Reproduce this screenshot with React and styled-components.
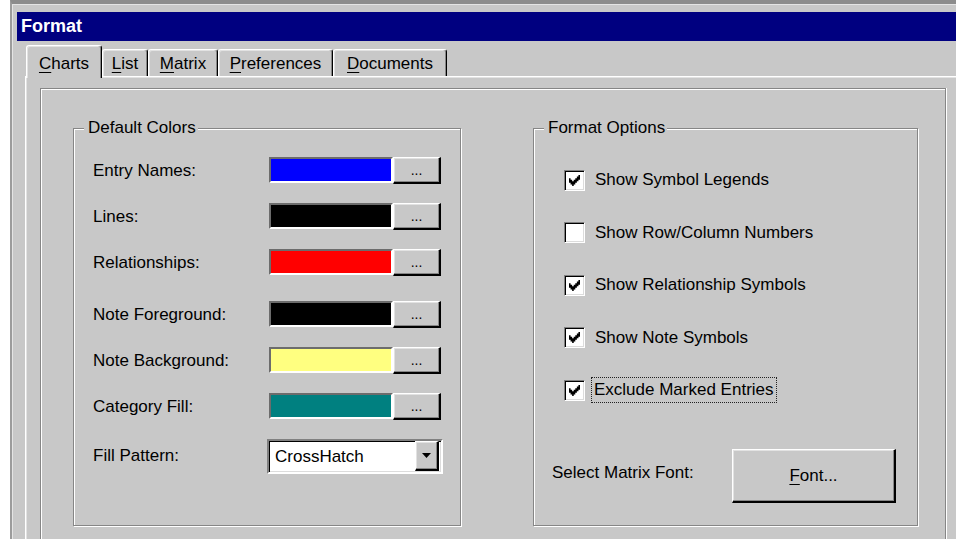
import React from "react";
import styled, { createGlobalStyle } from "styled-components";

const FACE = "#c8c8c8";
const SHADOW = "#868686";

const GlobalStyle = createGlobalStyle`
  html, body {
    margin: 0;
    padding: 0;
    background: #fff;
    overflow: hidden;
  }
  body {
    font-family: "Liberation Sans", Arial, sans-serif;
    font-size: 17px;
    color: #000;
  }
`;

const Window = styled.div`
  box-sizing: border-box;
  display: flex;
  flex-direction: column;
  margin-left: 10px;
  width: 946px;
  height: 539px;
  overflow: hidden;
  padding: 8px 0 0 5px;
  background: ${FACE};
  border-top: 4px solid #8c8c8c;
  border-left: 2px solid #9c9c9c;
  box-shadow: inset 1px 1px 0 #e4e4e4;
`;

const TitleBar = styled.div`
  display: flex;
  align-items: center;
  flex-shrink: 0;
  height: 29px;
  padding-left: 4px;
  background: #000080;
  color: #fff;
  font-size: 18px;
  font-weight: bold;
`;

const Body = styled.div`
  flex: 1;
  display: flex;
  flex-direction: column;
  padding: 4px 0 0 8px;
`;

const TabStrip = styled.div`
  position: relative;
  z-index: 1;
  display: flex;
  align-items: flex-end;
  flex-shrink: 0;
  height: 31px;
  padding-left: 1px;
`;

const Tab = styled.div`
  box-sizing: border-box;
  display: flex;
  justify-content: center;
  width: ${(p) => p.$width}px;
  height: ${(p) => (p.$active ? 33 : 27)}px;
  margin-bottom: ${(p) => (p.$active ? -2 : 0)}px;
  padding-top: ${(p) => (p.$active ? 8 : 4)}px;
  line-height: 20px;
  background: ${FACE};
  border-top: 1px solid #fff;
  border-left: 1px solid #fff;
  border-right: 1px solid #000;
  border-radius: 3px 3px 0 0;
  box-shadow: inset -1px 0 0 ${SHADOW}, inset 1px 1px 0 #e2e2e2;
`;

const Key = styled.span`
  text-decoration: underline;
  text-underline-offset: 3px;
`;

const Page = styled.div`
  flex: 1;
  display: flex;
  padding: 11px 0 0 14px;
  border-top: 1px solid #fff;
  border-left: 1px solid #fff;
  box-shadow: inset 1px 1px 0 #e2e2e2;
`;

/* etched frame inside the tab page; its bottom runs past the window */
const Frame = styled.div`
  box-sizing: border-box;
  display: grid;
  grid-template-columns: 388px 385px;
  column-gap: 72px;
  align-items: start;
  width: 906px;
  padding: 39px 0 0 32px;
  border: 1px solid ${SHADOW};
  border-bottom: none;
  box-shadow: inset 1px 1px 0 #fff, 1px 0 0 #fff;
`;

const Group = styled.div`
  position: relative;
  box-sizing: border-box;
  height: 398px;
  padding: ${(p) => p.$pad};
  border: 1px solid ${SHADOW};
  box-shadow: inset 1px 1px 0 #fff, 1px 1px 0 #fff;
`;

const Legend = styled.span`
  position: absolute;
  top: -11px;
  left: 10px;
  padding: 0 2px 0 4px;
  line-height: 20px;
  background: ${FACE};
`;

const Rows = styled.div`
  display: flex;
  flex-direction: column;
  gap: 19px;
`;

const Row = styled.div`
  display: flex;
  align-items: center;
  height: ${(p) => p.$height || 27}px;
  margin-top: ${(p) => p.$extra || 0}px;
`;

const Label = styled.span`
  width: ${(p) => p.$width}px;
  flex-shrink: 0;
  padding-bottom: ${(p) => p.$lift || 0}px;
`;

const Swatch = styled.div`
  box-sizing: border-box;
  align-self: flex-start;
  width: 124px;
  height: 26px;
  background: ${(p) => p.$color};
  border: 2px solid;
  border-color: #6c6c6c #fff #fff #6c6c6c;
`;

const RaisedButton = styled.div`
  box-sizing: border-box;
  display: flex;
  align-items: center;
  justify-content: center;
  width: ${(p) => p.$width}px;
  height: ${(p) => p.$height}px;
  background: ${FACE};
  border-top: 1px solid #fff;
  border-left: 1px solid #fff;
  border-right: 2px solid #000;
  border-bottom: 2px solid #000;
  box-shadow: inset -1px -1px 0 ${SHADOW}, inset 1px 1px 0 #e2e2e2;
  font-size: ${(p) => p.$size || 17}px;
`;

const Combo = styled.div`
  box-sizing: border-box;
  display: flex;
  align-items: center;
  width: 176px;
  height: 35px;
  margin-left: -2px;
  padding: 0 1px 0 6px;
  background: #fff;
  border: 2px solid;
  border-color: #808080 #fff #fff #808080;
  box-shadow: inset 1px 1px 0 #000, inset -1px -1px 0 #dcdcdc;
`;

const ComboText = styled.span`
  flex: 1;
`;

const DropButton = styled(RaisedButton)`
  align-self: stretch;
  height: auto;
  margin: 0 1px 1px 0;
`;

const Checks = styled.div`
  display: flex;
  flex-direction: column;
  gap: 26.5px;
`;

const CheckRow = styled.div`
  display: flex;
  align-items: center;
  gap: 9px;
  height: 26px;
`;

const Box = styled.div`
  box-sizing: border-box;
  display: flex;
  align-items: center;
  justify-content: center;
  width: 21px;
  height: 21px;
  background: #fff;
  border: 1px solid;
  border-color: #808080 #fff #fff #808080;
  box-shadow: inset 1px 1px 0 #000, inset -1px -1px 0 #dcdcdc;
`;

const CheckText = styled.span`
  line-height: 20px;
  padding: 2px 2px 2px ${(p) => (p.$focus ? 2 : 0)}px;
  margin-left: ${(p) => (p.$focus ? -3 : 0)}px;
  border: 1px dotted ${(p) => (p.$focus ? "#222" : "transparent")};
`;

const FontRow = styled.div`
  display: flex;
  align-items: center;
  margin: 46px 0 0 -12px;
`;

const colors = [
  { label: "Entry Names:", color: "#0000ff" },
  { label: "Lines:", color: "#000000" },
  { label: "Relationships:", color: "#ff0000" },
  { label: "Note Foreground:", color: "#000000", extra: 6 },
  { label: "Note Background:", color: "#ffff80" },
  { label: "Category Fill:", color: "#008080" },
];

const options = [
  { label: "Show Symbol Legends", checked: true },
  { label: "Show Row/Column Numbers", checked: false },
  { label: "Show Relationship Symbols", checked: true },
  { label: "Show Note Symbols", checked: true },
  { label: "Exclude Marked Entries", checked: true, focus: true },
];

const tabs = [
  { key: "C", rest: "harts", width: 76, active: true },
  { key: "L", rest: "ist", width: 46 },
  { key: "M", rest: "atrix", width: 70 },
  { key: "P", rest: "references", width: 115 },
  { key: "D", rest: "ocuments", width: 114 },
];

const Check = () => (
  <svg width="11" height="11" viewBox="0 0 7 7">
    <path
      d="M0 2h1v1h1v1h1v-1h1v-1h1v-1h1v-1h1v3h-1v1h-1v1h-1v1h-1v1h-1v-1h-1v-1h-1z"
      fill="#000"
    />
  </svg>
);

const Arrow = () => (
  <svg width="9" height="5" viewBox="0 0 9 5">
    <polygon points="0,0 9,0 4.5,5" fill="#000" />
  </svg>
);

export default function App() {
  return (
    <>
      <GlobalStyle />
      <Window>
        <TitleBar>Format</TitleBar>
        <Body>
          <TabStrip>
            {tabs.map((t) => (
              <Tab key={t.key} $width={t.width} $active={t.active}>
                <span>
                  <Key>{t.key}</Key>
                  {t.rest}
                </span>
              </Tab>
            ))}
          </TabStrip>
          <Page>
            <Frame>
              <Group $pad="28px 0 0 19px">
                <Legend>Default Colors</Legend>
                <Rows>
                  {colors.map((c) => (
                    <Row key={c.label} $extra={c.extra}>
                      <Label $width={176}>{c.label}</Label>
                      <Swatch $color={c.color} />
                      <RaisedButton $width={48} $height={27} $size={14}>
                        ...
                      </RaisedButton>
                    </Row>
                  ))}
                  <Row $height={35}>
                    <Label $width={176} $lift={2}>Fill Pattern:</Label>
                    <Combo>
                      <ComboText>CrossHatch</ComboText>
                      <DropButton $width={24}>
                        <Arrow />
                      </DropButton>
                    </Combo>
                  </Row>
                </Rows>
              </Group>
              <Group $pad="38px 0 0 30px">
                <Legend>Format Options</Legend>
                <Checks>
                  {options.map((o) => (
                    <CheckRow key={o.label}>
                      <Box>{o.checked && <Check />}</Box>
                      <CheckText $focus={o.focus}>{o.label}</CheckText>
                    </CheckRow>
                  ))}
                </Checks>
                <FontRow>
                  <Label $width={180} $lift={6}>Select Matrix Font:</Label>
                  <RaisedButton $width={164} $height={54}>
                    <span>
                      <Key>F</Key>ont...
                    </span>
                  </RaisedButton>
                </FontRow>
              </Group>
            </Frame>
          </Page>
        </Body>
      </Window>
    </>
  );
}
